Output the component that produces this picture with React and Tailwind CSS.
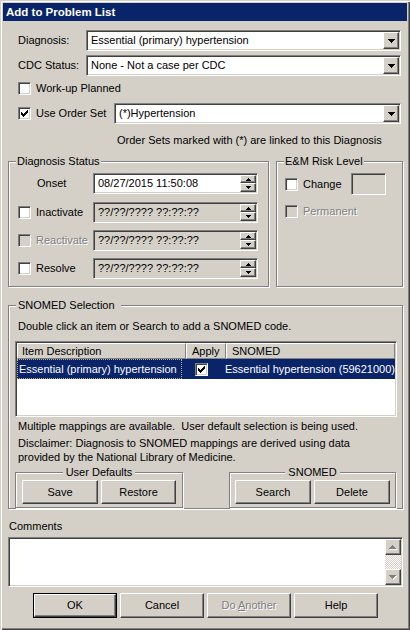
import React from "react";

const SUNKEN =
  "border border-t-[#808080] border-l-[#808080] border-r-white border-b-white shadow-[inset_1px_1px_0_#404040,inset_-1px_-1px_0_#d4d0c8]";
const RAISED =
  "bg-[#d4d0c8] border border-t-white border-l-white border-r-[#404040] border-b-[#404040] shadow-[inset_-1px_-1px_0_#808080]";
const GROUP =
  "border border-[#808080] shadow-[inset_1px_1px_0_#fff,1px_1px_0_#fff] min-w-0 p-0 m-0";
const DIS = "text-[#808080] [text-shadow:1px_1px_0_#fff]";

function DownArrow({ color = "#000" }) {
  return (
    <svg width="7" height="4" viewBox="0 0 7 4" shapeRendering="crispEdges">
      <rect x="0" y="0" width="7" height="1" fill={color} />
      <rect x="1" y="1" width="5" height="1" fill={color} />
      <rect x="2" y="2" width="3" height="1" fill={color} />
      <rect x="3" y="3" width="1" height="1" fill={color} />
    </svg>
  );
}

function GrayArrow({ up }) {
  const rows = up
    ? [
        [3, 0, 1],
        [2, 1, 3],
        [1, 2, 5],
        [0, 3, 7],
      ]
    : [
        [0, 0, 7],
        [1, 1, 5],
        [2, 2, 3],
        [3, 3, 1],
      ];
  return (
    <svg width="8" height="5" viewBox="0 0 8 5" shapeRendering="crispEdges">
      {rows.map(([x, y, w], i) => (
        <rect key={"w" + i} x={x + 1} y={y + 1} width={w} height="1" fill="#fff" />
      ))}
      {rows.map(([x, y, w], i) => (
        <rect key={"g" + i} x={x} y={y} width={w} height="1" fill="#808080" />
      ))}
    </svg>
  );
}

function SpinArrow({ up }) {
  const rows = up
    ? [
        [2, 0, 1],
        [1, 1, 3],
        [0, 2, 5],
      ]
    : [
        [0, 0, 5],
        [1, 1, 3],
        [2, 2, 1],
      ];
  return (
    <svg width="5" height="3" viewBox="0 0 5 3" shapeRendering="crispEdges">
      {rows.map(([x, y, w], i) => (
        <rect key={i} x={x} y={y} width={w} height="1" fill="#000" />
      ))}
    </svg>
  );
}

function CheckMark() {
  const r = [
    [6, 0, 1],
    [5, 1, 2],
    [0, 2, 1],
    [4, 2, 3],
    [0, 3, 2],
    [3, 3, 3],
    [0, 4, 5],
    [1, 5, 3],
    [2, 6, 1],
  ];
  return (
    <svg width="7" height="7" viewBox="0 0 7 7" shapeRendering="crispEdges">
      {r.map(([x, y, w], i) => (
        <rect key={i} x={x} y={y} width={w} height="1" fill="#000" />
      ))}
    </svg>
  );
}

function CheckBox({ checked, disabled }) {
  return (
    <div
      className={`${SUNKEN} w-[13px] h-[13px] shrink-0 flex items-center justify-center ${
        disabled ? "bg-[#d4d0c8]" : "bg-white"
      }`}
    >
      {checked && <CheckMark />}
    </div>
  );
}

function Combo({ w, text }) {
  return (
    <div className={`${SUNKEN} ${w} h-[21px] bg-white p-[1px] flex`}>
      <div className="flex-1 flex items-center pl-[3px] whitespace-nowrap overflow-hidden">
        {text}
      </div>
      <div className={`${RAISED} w-[16px] flex items-center justify-center`}>
        <DownArrow />
      </div>
    </div>
  );
}

function DateBox({ value, disabled }) {
  return (
    <div
      className={`${SUNKEN} w-[165px] h-[21px] p-[1px] flex ${
        disabled ? "bg-[#d4d0c8]" : "bg-white"
      }`}
    >
      <div className="flex-1 flex items-center pl-[3px] whitespace-nowrap">{value}</div>
      <div className="w-[16px] flex flex-col">
        <div className={`${RAISED} h-[8px] flex items-center justify-center`}>
          <SpinArrow up />
        </div>
        <div className={`${RAISED} h-[9px] flex items-center justify-center`}>
          <SpinArrow />
        </div>
      </div>
    </div>
  );
}

function Btn({ w, h, children }) {
  return (
    <div className={`${RAISED} ${w} ${h} flex items-center justify-center shrink-0`}>
      {children}
    </div>
  );
}

export default function App() {
  return (
    <div className="w-[410px] h-[630px] bg-[#d4d0c8] p-[3px] shadow-[inset_1px_1px_0_#d4d0c8,inset_2px_2px_0_#fff,inset_-1px_-1px_0_#404040,inset_-2px_-2px_0_#808080] font-['Liberation_Sans',Arial,sans-serif] text-[11px] leading-[13px] text-black flex flex-col overflow-hidden">
      <div className="h-[18px] shrink-0 bg-[#0a246a] flex items-center pl-[3px] text-white font-bold text-[11.5px]">
        Add to Problem List
      </div>

      <div className="flex flex-col">
        <div className="mt-[9px] flex items-center">
          <div className="ml-[15px] w-[68px]">Diagnosis:</div>
          <Combo w="w-[315px]" text="Essential (primary) hypertension" />
        </div>
        <div className="mt-[4px] flex items-center">
          <div className="ml-[15px] w-[68px]">CDC Status:</div>
          <Combo w="w-[315px]" text="None - Not a case per CDC" />
        </div>
        <div className="mt-[6px] ml-[15px] h-[13px] flex items-center">
          <CheckBox />
          <span className="ml-[5px]">Work-up Planned</span>
        </div>
        <div className="mt-[8px] flex items-center">
          <div className="ml-[15px] w-[96px] flex items-center">
            <CheckBox checked />
            <span className="ml-[5px]">Use Order Set</span>
          </div>
          <Combo w="w-[287px]" text="(*)Hypertension" />
        </div>
        <div className="mt-[10px] ml-[114px]">
          Order Sets marked with (*) are linked to this Diagnosis
        </div>

        <div className="mt-[8px] ml-[5px] flex">
          <fieldset className={`${GROUP} w-[261px] h-[132px]`}>
            <legend className="ml-[7px] px-[1px] bg-[#d4d0c8]">Diagnosis Status</legend>
            <div className="mt-[5px] h-[21px] flex items-center">
              <div className="w-[84px] pl-[28px]">Onset</div>
              <DateBox value="08/27/2015 11:50:08" />
            </div>
            <div className="mt-[8px] h-[21px] flex items-center">
              <div className="w-[84px] pl-[9px] flex items-center">
                <CheckBox />
                <span className="ml-[5px]">Inactivate</span>
              </div>
              <DateBox value="??/??/???? ??:??:??" disabled />
            </div>
            <div className="mt-[7px] h-[21px] flex items-center">
              <div className="w-[84px] pl-[9px] flex items-center">
                <CheckBox disabled />
                <span className={`ml-[5px] ${DIS}`}>Reactivate</span>
              </div>
              <DateBox value="??/??/???? ??:??:??" disabled />
            </div>
            <div className="mt-[7px] h-[21px] flex items-center">
              <div className="w-[84px] pl-[9px] flex items-center">
                <CheckBox />
                <span className="ml-[5px]">Resolve</span>
              </div>
              <DateBox value="??/??/???? ??:??:??" disabled />
            </div>
          </fieldset>

          <fieldset className={`${GROUP} ml-[7px] w-[127px] h-[132px]`}>
            <legend className="ml-[7px] px-[1px] bg-[#d4d0c8]">E&amp;M Risk Level</legend>
            <div className="mt-[5px] h-[22px] pl-[8px] flex items-center">
              <CheckBox />
              <span className="ml-[5px] w-[48px]">Change</span>
              <div className={`${SUNKEN} w-[35px] h-[22px] bg-[#d4d0c8]`} />
            </div>
            <div className="mt-[10px] h-[13px] pl-[8px] flex items-center">
              <CheckBox disabled />
              <span className={`ml-[5px] ${DIS}`}>Permanent</span>
            </div>
          </fieldset>
        </div>

        <fieldset className={`${GROUP} mt-[12px] ml-[5px] w-[395px] h-[210px]`}>
          <legend className="ml-[7px] pl-[2px] pr-[6px] bg-[#d4d0c8]">SNOMED Selection</legend>
          <div className="mt-[8px] ml-[9px]">
            Double click an item or Search to add a SNOMED code.
          </div>
          <div
            className={`${SUNKEN} mt-[8px] ml-[6px] w-[382px] h-[76px] bg-white p-[1px] flex flex-col`}
          >
            <div className="h-[16px] flex shrink-0">
              <div className="w-[169px] bg-[#d4d0c8] border border-t-white border-l-white border-r-[#808080] border-b-[#808080] pl-[4px] flex items-center">
                Item Description
              </div>
              <div className="w-[40px] bg-[#d4d0c8] border border-t-white border-l-white border-r-[#808080] border-b-[#808080] pl-[5px] flex items-center">
                Apply
              </div>
              <div className="flex-1 bg-[#d4d0c8] border border-t-white border-l-white border-r-[#808080] border-b-[#808080] pl-[5px] flex items-center">
                SNOMED
              </div>
            </div>
            <div className="h-[20px] flex bg-[#0a246a] text-white shrink-0">
              <div className="w-[169px] border border-dotted border-[#b8ad86] pl-[1px] flex items-center whitespace-nowrap">
                Essential (primary) hypertension
              </div>
              <div className="w-[40px] flex items-center justify-center">
                <CheckBox checked />
              </div>
              <div className="flex-1 pl-[4px] flex items-center whitespace-nowrap">
                Essential hypertension (59621000)
              </div>
            </div>
          </div>
          <div className="mt-[3px] ml-[9px] whitespace-pre">
            {"Multiple mappings are available.  User default selection is being used."}
          </div>
          <div className="mt-[3px] ml-[9px] leading-[14px]">
            Disclaimer: Diagnosis to SNOMED mappings are derived using data
            <br />
            provided by the National Library of Medicine.
          </div>
          <div className="mt-[2px] ml-[6px] flex">
            <fieldset className={`${GROUP} w-[168px] h-[42px]`}>
              <legend className="mx-auto px-[3px] bg-[#d4d0c8]">User Defaults</legend>
              <div className="mt-[1px] ml-[6px] flex gap-[3px]">
                <Btn w="w-[76px]" h="h-[24px]">Save</Btn>
                <Btn w="w-[75px]" h="h-[24px]">Restore</Btn>
              </div>
            </fieldset>
            <fieldset className={`${GROUP} ml-[46px] w-[167px] h-[42px]`}>
              <legend className="mx-auto px-[3px] bg-[#d4d0c8]">SNOMED</legend>
              <div className="mt-[1px] ml-[5px] flex gap-[3px]">
                <Btn w="w-[76px]" h="h-[24px]">Search</Btn>
                <Btn w="w-[76px]" h="h-[24px]">Delete</Btn>
              </div>
            </fieldset>
          </div>
        </fieldset>

        <div className="mt-[11px] ml-[6px]">Comments</div>
        <div className={`${SUNKEN} mt-[4px] ml-[5px] w-[395px] h-[50px] bg-white p-[1px] flex justify-end`}>
          <div className="w-[16px] flex flex-col">
            <div className={`${RAISED} h-[16px] shrink-0 flex items-center justify-center`}>
              <GrayArrow up />
            </div>
            <div className="flex-1 bg-[repeating-conic-gradient(#d4d0c8_0_25%,#fff_0_50%)] bg-size-[2px_2px]" />
            <div className={`${RAISED} h-[16px] shrink-0 flex items-center justify-center`}>
              <GrayArrow />
            </div>
          </div>
        </div>

        <div className="mt-[6px] ml-[30px] flex gap-[3px]">
          <div className="w-[84px] h-[25px] border border-black flex">
            <div className={`${RAISED} flex-1 flex items-center justify-center`}>OK</div>
          </div>
          <Btn w="w-[84px]" h="h-[25px]">Cancel</Btn>
          <Btn w="w-[84px]" h="h-[25px]">
            <span className={DIS}>
              Do <span className="underline">A</span>nother
            </span>
          </Btn>
          <Btn w="w-[84px]" h="h-[25px]">Help</Btn>
        </div>
      </div>
    </div>
  );
}
